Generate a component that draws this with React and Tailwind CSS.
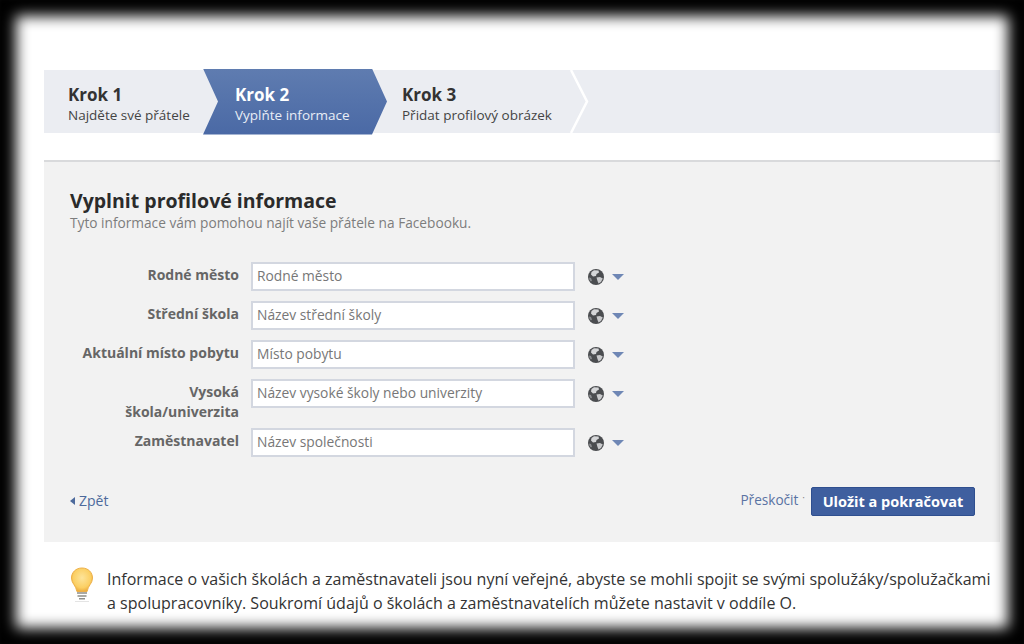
const fields = [
  { label: 'Rodné město', placeholder: 'Rodné město' },
  { label: 'Střední škola', placeholder: 'Název střední školy' },
  { label: 'Aktuální místo pobytu', placeholder: 'Místo pobytu' },
  { label: 'Vysoká škola/univerzita', placeholder: 'Název vysoké školy nebo univerzity', tall: true },
  { label: 'Zaměstnavatel', placeholder: 'Název společnosti' },
];

function GlobeIcon() {
  return (
    <svg width="16" height="16" viewBox="0 0 16 16" className="shrink-0">
      <circle cx="8" cy="8" r="8" fill="#4b4d50" />
      <path d="M6 1.2 10.5 1.5 11 3.5 8.5 5 8 7 5 7.5 3 5.5 3.5 3Z" fill="#d5d6d8" />
      <path d="M8.5 8.5 12 8 14.8 9.5 13 13 10.5 14.5 9.5 12Z" fill="#c9cacc" />
      <path d="M1 8.5 3 9 4 11.5 3 12.5 1.5 11Z" fill="#8c8e91" />
    </svg>
  );
}

function BulbIcon() {
  return (
    <svg width="24" height="36" viewBox="0 0 24 36" className="shrink-0">
      <defs>
        <radialGradient id="bulb" cx="50%" cy="42%" r="60%">
          <stop offset="0%" stopColor="#fde49a" />
          <stop offset="70%" stopColor="#fbcf63" />
          <stop offset="100%" stopColor="#eaa93a" />
        </radialGradient>
      </defs>
      <path d="M12 1C5.6 1 1.5 5.6 1.5 11c0 5.600 4.600 7.500 5.400 13.500h10.200c.8-6 5.400-7.900 5.400-13.500C22.500 5.600 18.400 1 12 1Z" fill="url(#bulb)" stroke="#eeb048" />
      <path d="M7 25h10v2H7zM7.500 28h9v2h-9z" fill="#a9a9a4" />
      <path d="M9 31h6v1.500H9z" fill="#8f8f8b" />
      <path d="M5 34h14v1H5z" fill="#e4e4e4" />
    </svg>
  );
}

function Step({ title, sub, className, subClassName }) {
  return (
    <div className={className}>
      <div className="text-[17px] leading-[21px] font-bold">{title}</div>
      <div className={`text-[13.5px] leading-[20px] ${subClassName}`}>{sub}</div>
    </div>
  );
}

export default function App() {
  return (
    <div className="relative h-[644px] w-[1024px] overflow-hidden bg-white pl-[44px] pr-[24px] pt-[70px] font-['Open_Sans','Liberation_Sans',sans-serif] text-[#333]">
      {/* 단계 표시 */}
      <div className="flex h-[63px] items-center bg-[#ebedf2]">
        <Step
          title="Krok 1"
          sub="Najděte své přátele"
          className="w-[159px] pl-[24px] pt-[5px] text-[#333]"
          subClassName="text-[#444]"
        />
        <Step
          title="Krok 2"
          sub="Vyplňte informace"
          className="flex h-[66px] w-[184px] flex-col justify-center bg-gradient-to-b from-[#5f7cb0] to-[#4a69a5] pl-[32px] pt-[5px] text-white [clip-path:polygon(0_0,169px_0,184px_50%,169px_100%,0_100%,15px_50%)]"
          subClassName="text-[#e8edf6]"
        />
        <Step
          title="Krok 3"
          sub="Přidat profilový obrázek"
          className="w-[183px] pl-[15px] pt-[5px] text-[#333]"
          subClassName="text-[#444]"
        />
        <svg width="20" height="63" viewBox="0 0 20 63" className="shrink-0">
          <path d="M1 0 17 31.500 1 63" fill="none" stroke="#fff" strokeWidth="2.500" />
        </svg>
      </div>

      {/* 프로필 입력 폼 */}
      <div className="mt-[27px] h-[382px] border-t-2 border-[#d9dadc] bg-[#f2f2f2] pl-[26px] pr-[25px] pt-[27px]">
        <h1 className="text-[19.5px] leading-[24px] font-bold text-[#2b2b2b]">Vyplnit profilové informace</h1>
        <p className="text-[13.7px] leading-[19px] text-[#7d7d7d]">Tyto informace vám pomohou najít vaše přátele na Facebooku.</p>

        <div className="mt-[30px] flex flex-col">
          {fields.map((f) => (
            <div key={f.label} className={`flex items-start ${f.tall ? 'h-[49px]' : 'h-[39px]'}`}>
              <label className="w-[169px] shrink-0 pl-[6px] pt-[3px] text-right text-[14px] leading-[20px] font-bold text-[#666]">{f.label}</label>
              <div className="ml-[12px] flex h-[29px] w-[324px] shrink-0 items-center border-2 border-[#d3d7e0] bg-white pl-[4px] text-[13.8px] text-[#777]">
                {f.placeholder}
              </div>
              <div className="ml-[13px] flex h-[29px] items-center">
                <GlobeIcon />
                <span className="ml-[8px] h-0 w-0 border-x-[6px] border-t-[6px] border-x-transparent border-t-[#6f87b5]" />
              </div>
            </div>
          ))}
        </div>

        <div className="mt-[20px] flex h-[29px] items-center">
          <div className="flex items-center pb-[2px] text-[14px] text-[#4d6a9c]">
            <span className="mr-[4px] h-0 w-0 border-y-[4px] border-r-[5px] border-y-transparent border-r-[#4d6a9c]" />
            Zpět
          </div>
          <div className="ml-auto flex items-center text-[13.6px] text-[#5a73a3]">
            <span className="pb-[2px]">Přeskočit</span>
            <span className="ml-[4px] mr-[6px] -translate-y-1 text-[10px] text-[#888]">·</span>
            <button className="h-[29px] w-[164px] rounded-[2px] border border-[#2f4f8f] bg-[#3f5f9f] text-[14.5px] font-bold text-white">
              Uložit a pokračovat
            </button>
          </div>
        </div>
      </div>

      {/* 안내 문구 */}
      <div className="mt-[25px] flex items-start pl-[26px]">
        <BulbIcon />
        <p className="ml-[13px] w-[890px] shrink-0 text-[16.05px] leading-[24px] text-[#333]">
          Informace o vašich školách a zaměstnavateli jsou nyní veřejné, abyste se mohli spojit se svými spolužáky/spolužačkami a spolupracovníky. Soukromí údajů o školách a zaměstnavatelích můžete nastavit v oddíle O.
        </p>
      </div>

      {/* 검은 비네트 테두리 */}
      <div className="pointer-events-none absolute inset-0 shadow-[inset_0_0_14px_16px_#000]" />
    </div>
  );
}
